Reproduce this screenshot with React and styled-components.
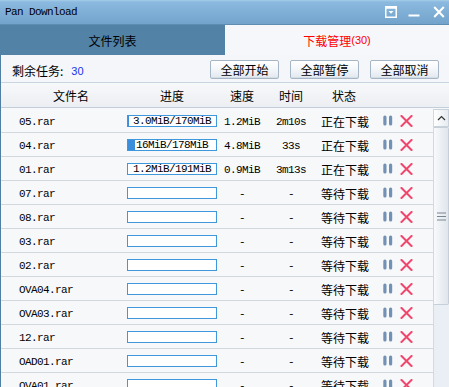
import React from 'react';
import styled, { createGlobalStyle } from 'styled-components';

const CJK = `"Noto Sans CJK SC", "Noto Sans", sans-serif`;
const MONO = `"Liberation Mono", "Noto Sans CJK SC", monospace`;

const GlobalStyle = createGlobalStyle`
  * { box-sizing: border-box; }
  html, body { margin: 0; padding: 0; background: #f7f8fa; }
  body {
    width: 449px; height: 387px; overflow: hidden;
    font-family: ${CJK}; font-size: 12px; color: #000;
  }
`;

const Window = styled.div`
  width: 449px; height: 387px; display: flex; flex-direction: column;
  overflow: hidden; background: #f7f8fa;
`;

const TitleBar = styled.div`
  flex: none; height: 25px; display: flex; align-items: center;
  padding: 0 4px 0 5px;
  background: linear-gradient(#a6cdea 0px, #8bb9df 2px, #73a3cb 100%);
  border-bottom: 1px solid #5f8db2;
`;

const Title = styled.div`
  font-family: ${MONO}; font-size: 11px; letter-spacing: -0.6px; color: #000;
`;

const TitleButtons = styled.div`
  margin-left: auto; display: flex; align-items: center; gap: 11px;
  svg { display: block; }
  svg:last-child { margin-left: 2px; }
`;

const Tabs = styled.div`
  flex: none; height: 30px; display: grid; grid-template-columns: 225px 1fr;
`;

const Tab = styled.div`
  display: flex; align-items: center; justify-content: center;
  font-size: 12px;
  background: ${p => (p.$active ? '#f5f7fa' : '#5282a5')};
  color: ${p => (p.$active ? '#ff0000' : '#000')};
`;

const TabCount = styled.span`
  font-family: "Liberation Sans", sans-serif; font-size: 11px;
`;

const Body = styled.div`
  flex: 1; min-height: 0; display: flex; flex-direction: column;
  border-left: 1px solid #4f7fa2;
`;

const Toolbar = styled.div`
  flex: none; height: 28px; display: flex; align-items: center;
  padding: 0 10px 0 11px; background: #f4f6f9;
  border-bottom: 1px solid #c9d5e0;
`;

const Remaining = styled.div`
  display: flex; align-items: center; padding-top: 4px;
`;

const Count = styled.span`
  margin-left: 8px; color: #1432f0;
  font-family: "Liberation Sans", sans-serif; font-size: 11px;
`;

const Buttons = styled.div`
  margin-left: auto; display: flex; gap: 11px; padding-top: 1px;
`;

const Button = styled.button`
  width: 69px; height: 19px; padding: 0; margin: 0;
  font-family: ${CJK}; font-size: 12px; line-height: 17px; color: #000;
  border: 1px solid #a7b6c6; border-radius: 2px;
  background: linear-gradient(#ffffff 0%, #f3f6f9 50%, #e2e8ee 100%);
  box-shadow: inset 0 -1px 0 #d3dde6;
`;

const COLS = '120px 102px 38px 60px 46px 1fr';

const Header = styled.div`
  flex: none; height: 25px; display: grid; grid-template-columns: ${COLS};
  align-items: center; padding-right: 16px;
  background: linear-gradient(#f7f8fa, #eceff3);
  border-bottom: 1px solid #c3ced9;
`;

const HeadCell = styled.div`
  text-align: center; white-space: nowrap;
  padding-left: ${p => p.$pad || 0}px;
`;

const ListArea = styled.div`
  flex: 1; min-height: 0; display: flex; padding-top: 1px; overflow: hidden;
`;

const List = styled.div`
  flex: 1; min-width: 0;
`;

const Row = styled.div`
  height: 24px; display: grid; grid-template-columns: ${COLS};
  align-items: center; border-bottom: 1px solid #d3d8de; background: #f7f8fa;
`;

const NameCell = styled.div`
  padding-left: 18px; font-family: ${MONO}; font-size: 11px; letter-spacing: -0.6px;
  white-space: nowrap; padding-top: 2px;
`;

const MonoCell = styled.div`
  text-align: center; font-family: ${MONO}; font-size: 11px; letter-spacing: -0.6px;
  white-space: nowrap; padding-top: 2px;
`;

const StatusCell = styled.div`
  text-align: center; white-space: nowrap; padding-top: 1px;
`;

const ActionCell = styled.div`
  display: flex; align-items: center; gap: 7px; padding-left: 16px;
  svg { display: block; }
`;

const ProgressBox = styled.div`
  position: relative; width: 90px; height: 12px; margin: 1px auto 0;
  border: 1px solid #3f98dc; background: #ffffff; overflow: hidden;
  font-family: ${MONO}; font-size: 11px; letter-spacing: -0.6px;
  line-height: 10px; text-align: center;
`;

const ProgressFill = styled.div`
  position: absolute; left: 0; top: 0; bottom: 0; background: #3a8edb;
`;

const ProgressText = styled.span`
  position: relative;
`;

const Scrollbar = styled.div`
  flex: none; width: 16px; display: flex; flex-direction: column;
  background: #e9eff4; border-left: 1px solid #d2d9e0;
`;

const ScrollUp = styled.div`
  height: 18px; display: flex; align-items: center; justify-content: center;
  background: linear-gradient(90deg, #ffffff, #e6ebf0);
  border: 1px solid #c9d1da; border-left: none;
  svg { display: block; }
`;

const Thumb = styled.div`
  height: 178px; display: flex; align-items: center; justify-content: center;
  background: linear-gradient(90deg, #f8fafc, #dfe5eb);
  border: 1px solid #c6ced7; border-left: none; border-radius: 0 2px 2px 0;
  svg { display: block; }
`;

const rows = [
  { name: '05.rar', prog: '3.0MiB/170MiB', pct: 3.0 / 170, speed: '1.2MiB', time: '2m10s', status: '正在下载' },
  { name: '04.rar', prog: '16MiB/178MiB', pct: 16 / 178, speed: '4.8MiB', time: '33s', status: '正在下载' },
  { name: '01.rar', prog: '1.2MiB/191MiB', pct: 1.2 / 191, speed: '0.9MiB', time: '3m13s', status: '正在下载' },
  { name: '07.rar' },
  { name: '08.rar' },
  { name: '03.rar' },
  { name: '02.rar' },
  { name: 'OVA04.rar' },
  { name: 'OVA03.rar' },
  { name: '12.rar' },
  { name: 'OAD01.rar' },
  { name: 'OVA01.rar' },
];

const PauseIcon = () => (
  <svg width="10" height="11" viewBox="0 0 10 11">
    <rect x="0.3" y="0.5" width="3.2" height="10" rx="1.5" fill="#7291b4" />
    <rect x="6" y="0.5" width="3.2" height="10" rx="1.5" fill="#7291b4" />
  </svg>
);

const CancelIcon = () => (
  <svg width="13" height="12" viewBox="0 0 13 12">
    <path d="M1.5 1 L11.5 11 M11.5 1 L1.5 11" stroke="#f2456c" strokeWidth="2" strokeLinecap="square" fill="none" />
  </svg>
);

export default function App() {
  return (
    <Window>
      <GlobalStyle />
      <TitleBar>
        <Title>Pan Download</Title>
        <TitleButtons>
          <svg width="12" height="12" viewBox="0 0 12 12">
            <rect x="0.75" y="0.75" width="10.5" height="10.5" fill="none" stroke="#fff" strokeWidth="1.5" />
            <rect x="0.75" y="0.75" width="10.5" height="2" fill="#fff" />
            <path d="M3.5 5 L8.5 5 L6 7.8 Z" fill="#fff" />
          </svg>
          <svg width="12" height="12" viewBox="0 0 12 12">
            <rect x="0.5" y="8.5" width="11" height="2" fill="#fff" />
          </svg>
          <svg width="12" height="12" viewBox="0 0 12 12">
            <path d="M1.2 1 L10.8 11 M10.8 1 L1.2 11" stroke="#fff" strokeWidth="2" fill="none" />
          </svg>
        </TitleButtons>
      </TitleBar>
      <Tabs>
        <Tab>文件列表</Tab>
        <Tab $active>下载管理<TabCount>(30)</TabCount></Tab>
      </Tabs>
      <Body>
        <Toolbar>
          <Remaining>剩余任务:<Count>30</Count></Remaining>
          <Buttons>
            <Button>全部开始</Button>
            <Button>全部暂停</Button>
            <Button>全部取消</Button>
          </Buttons>
        </Toolbar>
        <Header>
          <HeadCell $pad={20}>文件名</HeadCell>
          <HeadCell>进度</HeadCell>
          <HeadCell>速度</HeadCell>
          <HeadCell>时间</HeadCell>
          <HeadCell>状态</HeadCell>
          <div />
        </Header>
        <ListArea>
          <List>
            {rows.map(r => (
              <Row key={r.name}>
                <NameCell>{r.name}</NameCell>
                <div>
                  <ProgressBox>
                    {r.pct ? <ProgressFill style={{ width: Math.floor(r.pct * 88) + 'px' }} /> : null}
                    <ProgressText>{r.prog || ''}</ProgressText>
                  </ProgressBox>
                </div>
                <MonoCell>{r.speed || '-'}</MonoCell>
                <MonoCell>{r.time || '-'}</MonoCell>
                <StatusCell>{r.status || '等待下载'}</StatusCell>
                <ActionCell>
                  <PauseIcon />
                  <CancelIcon />
                </ActionCell>
              </Row>
            ))}
          </List>
          <Scrollbar>
            <ScrollUp>
              <svg width="9" height="6" viewBox="0 0 9 6">
                <path d="M1 5 L4.5 1.5 L8 5" stroke="#333" strokeWidth="1.2" fill="none" />
              </svg>
            </ScrollUp>
            <Thumb>
              <svg width="9" height="9" viewBox="0 0 9 9">
                <path d="M0 1 H9 M0 4.5 H9 M0 8 H9" stroke="#7a8592" strokeWidth="1" fill="none" />
              </svg>
            </Thumb>
          </Scrollbar>
        </ListArea>
      </Body>
    </Window>
  );
}
